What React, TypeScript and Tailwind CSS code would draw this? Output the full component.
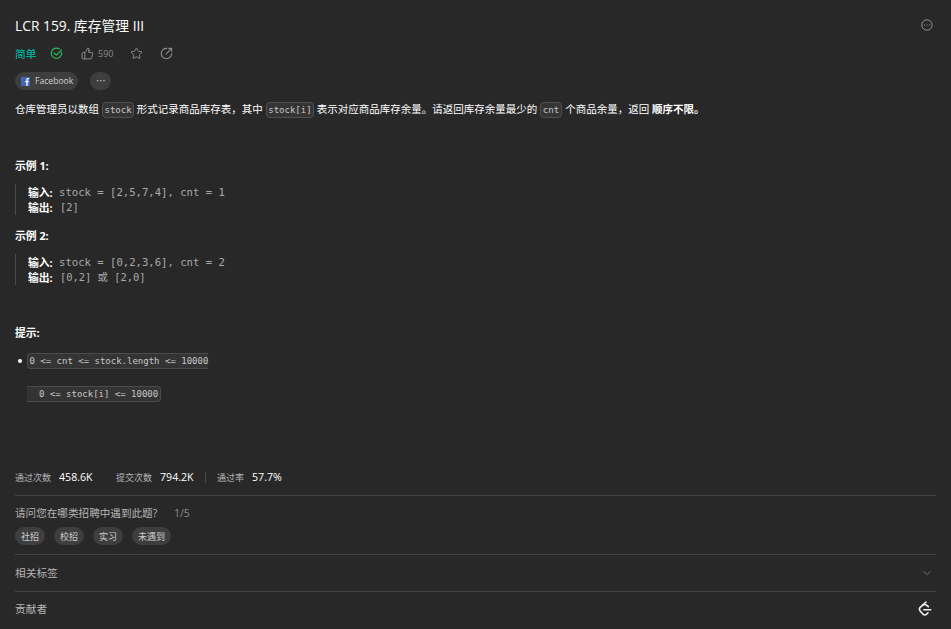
import React from "react"
import { Star, ThumbsUp, ChevronDown } from "lucide-react"

const STATS = [
  { label: '通过次数', value: '458.6K', style: 'w-[101px]' },
  { label: '提交次数', value: '794.2K', style: 'w-[89px]' },
  { label: '通过率', value: '57.7%', style: 'pl-[11px]' },
]

const EXAMPLES = [
  { title: '示例 1:', input: 'stock = [2,5,7,4], cnt = 1', output: '[2]', style: 'mt-[35px]' },
  { title: '示例 2:', input: 'stock = [0,2,3,6], cnt = 2', output: '[0,2] 或 [2,0]', style: 'mt-[10px]' },
]

const STAGES = ['社招', '校招', '实习', '未遇到']

const MONO = "font-['DejaVu_Sans_Mono','Noto_Sans_CJK_SC',monospace]"

const Code: React.FC<{children: React.ReactNode}> = ({children}) => (
  <code className={`${MONO} mr-[2.7px] ml-[3px] flex h-4 items-center rounded-[4px] border border-[#505050] bg-[#343434] px-[1.5px] pt-px text-[9px] text-[#c8c8c8]`}>{children}</code>
)

const Example: React.FC<{title: string, input: string, output: string, style: string}> = ({title, input, output, style}) => {
  return (
    <section className={style}>
      <h2 className="h-5 pt-px text-[10.8px] leading-5 font-bold text-white">{title}</h2>
      <div className="mt-[9px] h-[31px] border-l border-[#4b4b4b] pt-px pl-3 text-[10.8px] leading-[15px] text-[#a9a9a9]">
        <div className="flex h-[15px]">
          <b className="w-[31px] text-white">输入:</b>
          <span className={`${MONO} text-[10.6px] whitespace-pre`}>{input}</span>
        </div>
        <div className="flex h-[15px]">
          <b className="w-8 text-white">输出:</b>
          <span className={`${MONO} text-[10.4px] whitespace-pre`}>{output}</span>
        </div>
      </div>
    </section>
  )
}

const Check: React.FC = () => (
  <svg className="h-[13px] w-[13px]" viewBox="0 0 24 24" fill="none" stroke="#2cbb5d" strokeWidth="2.2" strokeLinecap="round" strokeLinejoin="round">
    <path d="M21.5 10.5A9.6 9.6 0 1 1 17 3.4" />
    <path d="M7.5 11l4.3 4L21 6" />
  </svg>
)

const Share: React.FC = () => (
  <svg className="h-[13px] w-[13px]" viewBox="0 0 24 24" fill="none" stroke="#8c8c8c" strokeWidth="2" strokeLinecap="round" strokeLinejoin="round">
    <path d="M12.5 2.5A9.6 9.6 0 1 0 21.5 12" />
    <path d="M16 2.5h5.5V8M21.5 2.5L11 13" />
  </svg>
)

const Facebook: React.FC = () => (
  <svg className="h-[9px] w-[9px] shrink-0" viewBox="0 0 9 9">
    <rect width="9" height="9" fill="#4267b2" />
    <path d="M8 1.7H6.9Q6 1.7 6 2.6V9M4.2 4.7H7.8" fill="none" stroke="#fff" strokeWidth="1.3" />
  </svg>
)

const Logo: React.FC = () => (
  <svg className="mr-[4px] mb-[2px] h-4 w-[14px]" viewBox="0 0 14 16" fill="none" stroke="#f0f0f0" strokeWidth="1.6" strokeLinecap="round" strokeLinejoin="round">
    <path d="M8 1L2.2 6.4Q.7 8.1 2.2 9.9L5 13.2Q6.8 14.8 8.6 13.2L10 11.8" />
    <path d="M4.6 4.3Q6.8 2.8 8.6 4.1L10.3 5.6M5.8 8.7H12.7" />
  </svg>
)

const App: React.FC = () => {
  return (
    <main className="h-[629px] w-[951px] overflow-hidden bg-[#282828] px-[15px] pt-4 font-['Open_Sans','Noto_Sans_CJK_SC',sans-serif] text-[10.5px] whitespace-nowrap text-white">
      <header className="flex h-5 items-center justify-between">
        <h1 className="text-[13.8px] leading-5">LCR 159. 库存管理 III</h1>
        <svg className="mr-[3px] -mt-[2px] h-3 w-3" viewBox="0 0 12 12" fill="none" stroke="#8c8c8c">
          <circle cx="6" cy="6" r="5.2" />
          <path d="M3 6h1M5.5 6h1M8 6h1" />
        </svg>
      </header>

      <div className="mt-[9px] flex h-[17px] items-center text-[#8c8c8c]">
        <span className="w-[35px] pt-[2px] text-[10.7px] font-medium text-[#00af9b]">简单</span>
        <Check />
        <ThumbsUp className="ml-[18px]" size={13} strokeWidth={1.8} />
        <span className="ml-1 w-[32px] pt-px text-[9px]">590</span>
        <Star className="mr-[17px]" size={13} strokeWidth={1.8} />
        <Share />
      </div>

      <div className="mt-[10px] flex h-[18px] gap-3">
        <span className="flex w-[63px] items-center gap-[5px] rounded-full bg-[#3e3e3e] pl-[6px] text-[8.6px] text-[#d0d0d0]"><Facebook /><span className="pt-px">Facebook</span></span>
        <span className="flex w-[21px] items-center justify-center rounded-full bg-[#3e3e3e]">
          <svg className="h-[2px] w-2" viewBox="0 0 8 2" fill="#cfcfcf"><path d="M0 0h1.2v1.2H0zM3.2 0h1.2v1.2H3.2zM6.4 0h1.2v1.2H6.4z" /></svg>
        </span>
      </div>

      <p className="mt-[10px] flex h-5 items-center">
        <span>仓库管理员以数组</span><Code>stock</Code>
        <span>形式记录商品库存表，其中</span><Code>stock[i]</Code>
        <span>表示对应商品库存余量。请返回库存余量最少的</span><Code>cnt</Code>
        <span className="pl-px">个商品余量，返回 <b>顺序不限。</b></span>
      </p>

      {EXAMPLES.map(e => <Example key={e.title} {...e} />)}

      <h2 className="mt-[37px] h-5 pt-px text-[10.8px] leading-5 font-bold">提示:</h2>
      <div className="mt-[11px] flex h-4 items-center">
        <i className="mr-2 ml-[3px] h-1 w-1 rounded-full bg-white" />
        <code className={`${MONO} -ml-[3px] flex h-4 items-center rounded-l-[4px] border border-r-0 border-[#4b4b4b] bg-[#343434] pt-px pl-[1.5px] text-[9px] text-[#c8c8c8]`}>{'0 <= cnt <= stock.length <= 10000'}</code>
      </div>
      <div className="mt-[17px] ml-3 flex h-4">
        <code className={`${MONO} flex items-center rounded-r-[4px] border border-l-0 border-[#4b4b4b] bg-[#343434] pt-px pr-[2px] pl-3 text-[9px] text-[#c8c8c8]`}>{'0 <= stock[i] <= 10000'}</code>
      </div>

      <div className="mt-[65px] flex h-5 items-center">
        {STATS.map((s, i) => (
          <div key={s.label} className={`${s.style} flex items-center ${i === 2 ? 'h-[11px] border-l border-[#4b4b4b]' : ''}`}>
            <span className="mr-2 pt-px text-[9px] text-[#b5b5b5]">{s.label}</span>
            <span className="pt-px text-[10.6px]">{s.value}</span>
          </div>
        ))}
      </div>

      <div className="mt-2 h-[59px] border-t border-[#434343] pt-2 text-[#b5b5b5]">
        <div className="flex h-[18px] items-center pt-px">
          <span className="w-[159px] text-[10.6px]">请问您在哪类招聘中遇到此题?</span>
          <span className="text-[#8c8c8c]">1/5</span>
        </div>
        <div className="mt-[5px] flex h-[18px] gap-[9px]">
          {STAGES.map(s => <span key={s} className="flex items-center rounded-full bg-[#3e3e3e] px-[6px] pt-px text-[9px] text-[#d0d0d0]">{s}</span>)}
        </div>
      </div>
      <div className="flex h-[37px] items-center justify-between border-t border-[#434343] text-[10.7px] text-[#b5b5b5]">
        <span className="pt-px">相关标签</span>
        <ChevronDown className="mr-[2px] text-[#505050]" size={14} strokeWidth={2} />
      </div>
      <div className="flex h-[36px] items-center justify-between border-t border-[#434343] text-[10.7px] text-[#b5b5b5]">
        <span>贡献者</span>
        <Logo />
      </div>
    </main>
  )
}

export default App
